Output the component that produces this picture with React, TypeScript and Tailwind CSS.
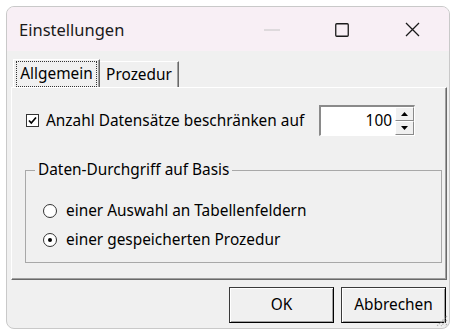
import type { ReactNode } from "react";

function Checkbox() {
  return (
    <span className="w-[13px] h-[13px] border border-[#333333] bg-white flex items-center justify-center shrink-0">
      <svg width="11" height="11" viewBox="0 0 11 11">
        <path d="M2 5.5 L4.3 8 L9 2.5" fill="none" stroke="#000" strokeWidth="1.7" />
      </svg>
    </span>
  );
}

function Radio({ checked = false }: { checked?: boolean }) {
  return (
    <span className="w-[14px] h-[14px] rounded-full border border-[#333333] bg-white flex items-center justify-center shrink-0">
      {checked && <span className="w-[4px] h-[4px] rounded-full bg-black" />}
    </span>
  );
}

function SpinButton({ up = false }: { up?: boolean }) {
  return (
    <div className="flex-1 bg-[#f0f0f0] border-t border-l border-t-white border-l-white border-b border-r border-b-[#8a8a8a] border-r-[#8a8a8a] flex items-center justify-center">
      <svg width="7" height="4" viewBox="0 0 7 4">
        {up ? <path d="M3.5 0 L7 4 L0 4 Z" fill="#000" /> : <path d="M0 0 L7 0 L3.5 4 Z" fill="#000" />}
      </svg>
    </div>
  );
}

function Button({ children }: { children: ReactNode }) {
  return (
    <button className="w-[105px] h-[36px] bg-[#f0f0f0] border border-[#3a3a3a] border-b-black border-r-black shadow-[inset_1px_1px_0_#ffffff,inset_-1px_-1px_0_#a0a0a0] text-[15.4px] text-black">
      {children}
    </button>
  );
}

export default function App() {
  return (
    <div className="w-[457px] h-[335px] bg-white pt-[6px] pl-[6px] font-['Noto_Sans','Open_Sans',sans-serif] text-black">
      <div className="relative w-[444px] h-[323px] rounded-[8px] border border-[#c9c9c9] overflow-hidden flex flex-col bg-[#f0f0f0]">
        {/* title bar */}
        <div className="h-[44px] shrink-0 bg-[#f8eff5] flex items-center">
          <span className="pl-[12px] pt-[3px] text-[16.5px] text-[#1a1a1a] flex-1">Einstellungen</span>
          <div className="w-[70px] h-full flex items-center justify-center pt-[1px]">
            <svg width="16" height="2" viewBox="0 0 16 2">
              <path d="M0 1 H16" stroke="#c4c4c4" strokeWidth="1" />
            </svg>
          </div>
          <div className="w-[70px] h-full flex items-center justify-center pt-[1px]">
            <svg width="14" height="14" viewBox="0 0 14 14">
              <rect x="0.75" y="0.75" width="12.5" height="12.5" rx="1" fill="none" stroke="#1a1a1a" strokeWidth="1.3" />
            </svg>
          </div>
          <div className="w-[70px] h-full flex items-center justify-center pt-[1px] mr-[2px]">
            <svg width="15" height="15" viewBox="0 0 15 15">
              <path d="M1 1 L14 14 M14 1 L1 14" stroke="#1a1a1a" strokeWidth="1.3" />
            </svg>
          </div>
        </div>

        {/* body */}
        <div className="flex-1 flex flex-col pt-[8px] pl-[4px]">
          {/* tabs */}
          <div className="h-[28px] flex items-end pl-[2px]">
            <div className="w-[87px] h-[28px] border-t border-l border-t-white border-l-white border-r border-r-[#696969] shadow-[inset_-1px_0_0_#a0a0a0] flex items-center justify-center">
              <span className="outline outline-1 outline-dotted outline-[#333] px-[3px] leading-[24px] text-[15.4px]">Allgemein</span>
            </div>
            <div className="w-[79px] h-[26px] border-t border-t-white border-r border-r-[#696969] shadow-[inset_-1px_0_0_#a0a0a0] flex items-center justify-center text-[15.4px]">
              Prozedur
            </div>
          </div>

          {/* panel */}
          <div className="w-[436px] h-[193px] border-t border-l border-t-white border-l-white border-b border-r border-b-[#696969] border-r-[#696969] shadow-[inset_-1px_-1px_0_#a0a0a0] flex flex-col">
            <div className="mt-[17px] h-[31px] flex items-center pl-[14px] pr-[31px]">
              <Checkbox />
              <span className="ml-[7px] text-[15.4px]">Anzahl Datensätze beschränken auf</span>
              <div className="ml-auto w-[96px] h-[31px] flex border-t-2 border-l-2 border-t-[#8a8a8a] border-l-[#8a8a8a] border-b border-r border-b-white border-r-white bg-white">
                <div className="flex-1 flex items-center justify-end pr-[3px] text-[15.4px]">100</div>
                <div className="w-[19px] flex flex-col">
                  <SpinButton up />
                  <SpinButton />
                </div>
              </div>
            </div>

            <fieldset className="mt-[24px] ml-[13px] mr-[4px] border border-[#a8a8a8] pt-[16px] pb-[8px]">
              <legend className="ml-[9px] px-[3px] text-[15.4px] leading-[20px]">Daten-Durchgriff auf Basis</legend>
              <div className="h-[29px] flex items-center pl-[17px]">
                <Radio />
                <span className="ml-[9px] text-[15.4px]">einer Auswahl an Tabellenfeldern</span>
              </div>
              <div className="h-[29px] flex items-center pl-[17px]">
                <Radio checked />
                <span className="ml-[9px] text-[15.4px]">einer gespeicherten Prozedur</span>
              </div>
            </fieldset>
          </div>

          {/* buttons */}
          <div className="mt-[7px] flex justify-end gap-[7px] pr-[3px]">
            <Button>OK</Button>
            <Button>Abbrechen</Button>
          </div>
        </div>

        <svg className="absolute right-[1px] bottom-[1px]" width="13" height="13" viewBox="0 0 13 13">
          <path d="M12 2 L2 12 M12 6 L6 12 M12 10 L10 12" stroke="#b0b0b0" strokeWidth="1.2" strokeDasharray="1.5 1" />
        </svg>
      </div>
    </div>
  );
}
